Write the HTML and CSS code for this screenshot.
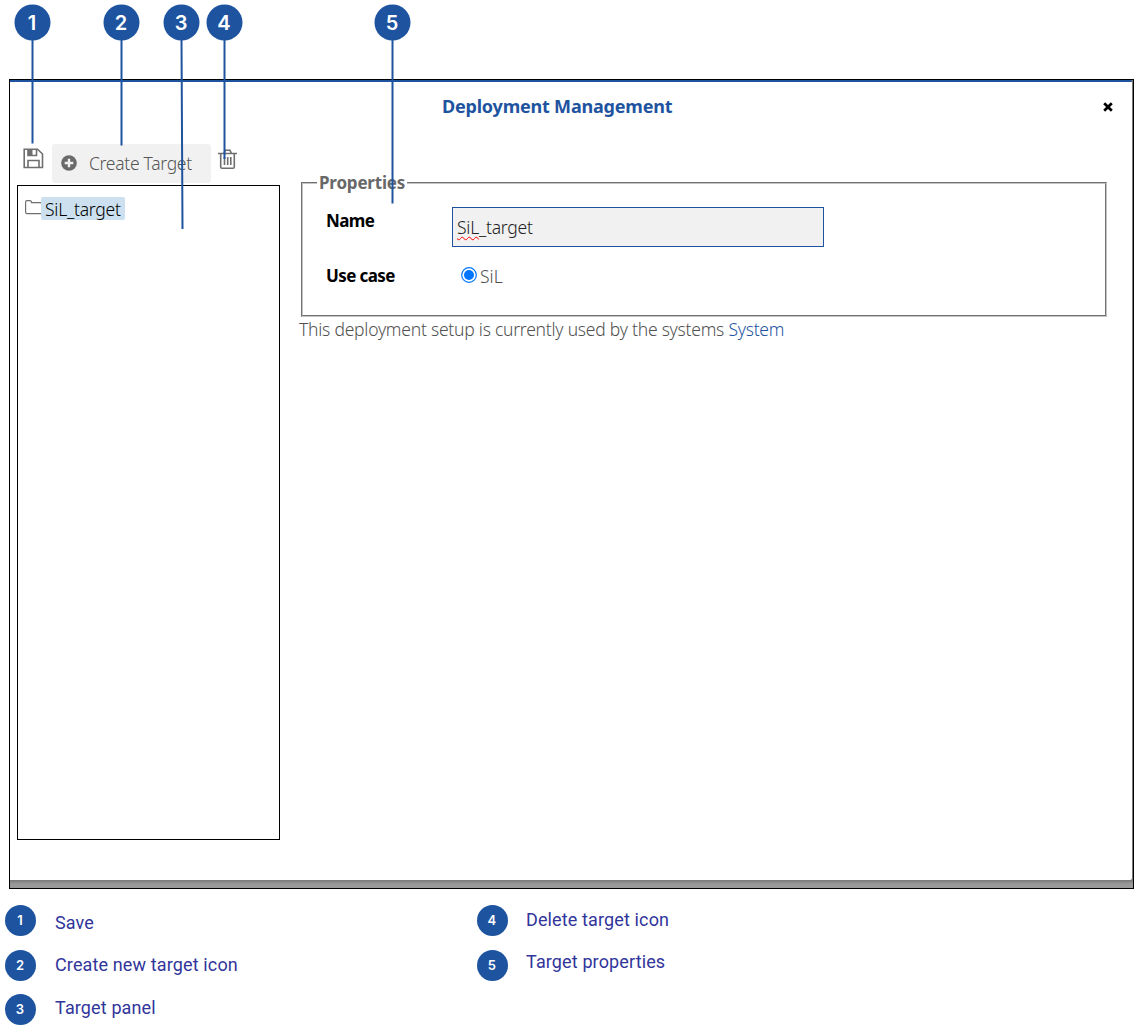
FILE: index.html
```html
<!DOCTYPE html>
<html lang="en">
<head>
<meta charset="utf-8">
<title>Deployment Management</title>
<link rel="stylesheet" href="styles.css">
</head>
<body>
<main class="figure">
  <section class="frame">
    <div class="dialog">
      <header class="dialog-header">
        <h1 class="dialog-title">Deployment Management</h1>
        <svg class="close" width="10" height="10" viewBox="0 0 10 10"><path d="M1.2 1.2 8.8 8.8M8.8 1.2 1.2 8.8" stroke="#000" stroke-width="2.7"/></svg>
      </header>
      <div class="dialog-body">
        <div class="sidebar">
          <div class="toolbar">
            <svg class="save" width="21" height="21" viewBox="0 0 21 21" fill="none" stroke="#6f6f6f" stroke-width="1.6"><path d="M1.2 1.2H14.5L19.5 6V19.5H1.2Z"/><path d="M5 19.5V12.5H16V19.5"/><path d="M5 1.2V7.5H13.5V1.2"/><path d="M5 1.5H9.5V7H5Z" fill="#6f6f6f" stroke="none"/></svg>
            <button class="create"><svg width="16" height="16" viewBox="0 0 16 16"><circle cx="8" cy="8" r="7.8" fill="#6a6a6a"/><path d="M8 3.7V12.3M3.7 8H12.3" stroke="#f1f1f1" stroke-width="2.4"/></svg><span class="create-text">Create Target</span></button>
            <svg class="trash" width="19" height="21" viewBox="0 0 19 21" fill="none" stroke="#6f6f6f" stroke-width="1.6"><path d="M0 4.5H19M2.7 4.5V18Q2.7 19.3 4 19.3H15Q16.3 19.3 16.3 18V4.5M5.8 4.5 7.2 1.3H12L13.5 4.5M6.5 8V16M9.7 8V16M12.8 8V16"/></svg>
          </div>
          <div class="tree">
            <svg class="folder" width="16" height="15" viewBox="0 0 16 15" fill="none" stroke="#6f6f6f" stroke-width="1.2"><path d="M16 13.6H2Q.6 13.6.6 12.200V2Q.6.6 2 .6H5Q6.200.6 6.400 1.800V2.600H15Q16 2.600 16 3.600"/></svg>
            <span class="node">SiL_target</span>
          </div>
        </div>
        <div class="details">
          <fieldset class="properties">
            <legend class="properties-title">Properties</legend>
            <div class="row"><label class="label name-label">Name</label><div class="field"><span class="value"><span class="misspelled">SiL</span>_target</span></div></div>
            <div class="row usecase"><label class="label usecase-label">Use case</label>
              <svg class="radio" width="16" height="16" viewBox="0 0 16 16"><circle cx="8" cy="8" r="7.3" fill="#fff" stroke="#0075ff" stroke-width="1.2"/><circle cx="8" cy="8" r="5" fill="#0075ff"/></svg>
              <span class="option">SiL</span></div>
          </fieldset>
          <p class="usage">This deployment setup is currently used by the systems <a class="system">System</a></p>
        </div>
      </div>
    </div>
  </section>
  <section class="key">
    <div class="key-column">
      <div class="key-item"><b class="dot">1</b><span class="key-text k1">Save</span></div>
      <div class="key-item"><b class="dot">2</b><span class="key-text k2">Create new target icon</span></div>
      <div class="key-item third"><b class="dot">3</b><span class="key-text k3">Target panel</span></div>
    </div>
    <div class="key-column">
      <div class="key-item"><b class="dot">4</b><span class="key-text k4">Delete target icon</span></div>
      <div class="key-item"><b class="dot">5</b><span class="key-text k5">Target properties</span></div>
    </div>
  </section>
  <svg class="callouts" width="420" height="235" viewBox="0 0 420 235">
    <g stroke="#1e549f" stroke-width="2"><path d="M32.5 40V143.5M121.5 40V145.5M181.5 40 182.5 229M224.5 40V159M392.5 40V203.500"/></g>
    <g fill="#1e549f"><circle cx="32.500" cy="22.500" r="18"/><circle cx="121.500" cy="22.500" r="18"/><circle cx="181.500" cy="22.500" r="18"/><circle cx="224.500" cy="22.500" r="18"/><circle cx="392.500" cy="22.500" r="18"/></g>
    <g class="callout-number"><text x="32" y="30">1</text><text x="121" y="30">2</text><text x="181" y="30">3</text><text x="224" y="30">4</text><text x="392" y="30">5</text></g>
  </svg>
</main>
</body>
</html>
```
FILE: styles.css
```css
* { box-sizing: border-box; }
body { margin: 0; background: #fff; font-family: "Noto Sans", sans-serif; font-size: 17.5px; font-weight: 300; color: #505050; }
.figure { position: relative; width: 1143px; height: 1032px; padding: 79px 0 0 9px; overflow: hidden; }
.frame { width: 1125px; height: 810px; border: 1px solid #000; padding: 0 1px 8px 0; background: linear-gradient(#777 800px, #999 804px); }
.dialog { height: 800px; background: #fff; border-top: 2px solid #1e549f; border-radius: 0 2px 2px 0; }
.dialog-header { display: flex; height: 62px; padding: 12px 19px 0 432px; justify-content: space-between; }
.dialog-title { margin: 0; font-size: 18px; line-height: 25px; font-weight: 700; letter-spacing: -0.2px; color: #1e549f; white-space: nowrap; }
.close { margin-top: 8px; }
.dialog-body { display: flex; padding-left: 7px; }
.sidebar { width: 263px; }
.toolbar { display: flex; height: 41px; }
.save { margin: 4px 8px 0 6px; }
.create { display: flex; align-items: center; width: 159px; height: 39px; padding: 0 0 2px 9px; gap: 12px; border: 0; border-radius: 3px; background: #f1f1f1; color: #555; font: 300 17.5px "Noto Sans", sans-serif; white-space: nowrap; }
.create-text { letter-spacing: -0.3px; }
.trash { margin: 5px 0 0 7px; }
.tree { display: flex; height: 655px; border: 1px solid #000; padding: 11px 7px; }
.folder { flex: none; margin-top: 3px; }
.node { width: 84px; height: 23px; padding-left: 4px; line-height: 25px; letter-spacing: -0.25px; border-radius: 2px; background: #cce0ef; color: #000; white-space: nowrap; }
.details { margin-left: 19px; padding-top: 27px; }
.properties { width: 806px; height: 146px; margin: 0 0 0 2px; padding: 0; border: 2px groove #c4c4c4; }
.properties-title { margin-left: 14px; padding: 0 2px; font-size: 17px; font-weight: 700; letter-spacing: -0.2px; line-height: 24px; color: #686868; }
.row { display: flex; padding-left: 23px; margin-top: 12px; height: 40px; }
.label { width: 126px; padding-top: 1px; font-size: 17px; line-height: 26px; font-weight: 700; letter-spacing: -0.6px; color: #000; white-space: nowrap; }
.field { width: 372px; height: 40px; border: 1px solid #1e549f; background: #f1f1f1; padding: 6px 4px; line-height: 26px; letter-spacing: -0.25px; color: #222; }
.misspelled { text-decoration: red wavy underline 1px; text-underline-offset: 2px; text-decoration-skip-ink: none; }
.usecase { margin-top: 15px; }
.radio { margin: 5px 3px 0 9px; }
.option { line-height: 28px; }
.usage { margin: 0; line-height: 25px; letter-spacing: -0.235px; white-space: nowrap; }
.system { color: #1e549f; }
.key { display: grid; grid-template-columns: 472px 1fr; margin: 15px 0 0 -4.5px; font: 18px/24px Roboto, sans-serif; letter-spacing: 0.13px; color: #31359b; }
.key-column { display: flex; flex-direction: column; }
.key-item { display: flex; height: 45px; }
.third { margin-top: -1px; }
.dot { width: 31px; height: 31px; margin: 0.5px 19.5px 0 0; border-radius: 50%; background: #1e549f; color: #fff; font: 600 13px/31px Inter, sans-serif; text-align: center; }
.key-text { white-space: nowrap; }
.k1 { padding-top: 7px; }
.k2 { padding-top: 4px; }
.k3 { padding-top: 3px; }
.k4 { padding-top: 4px; margin-left: -1px; }
.k5 { padding-top: 1px; margin-left: -1px; }
.callouts { position: absolute; left: 0; top: 0; }
.callout-number { fill: #fff; font: 600 20px Inter, sans-serif; text-anchor: middle; }
```
